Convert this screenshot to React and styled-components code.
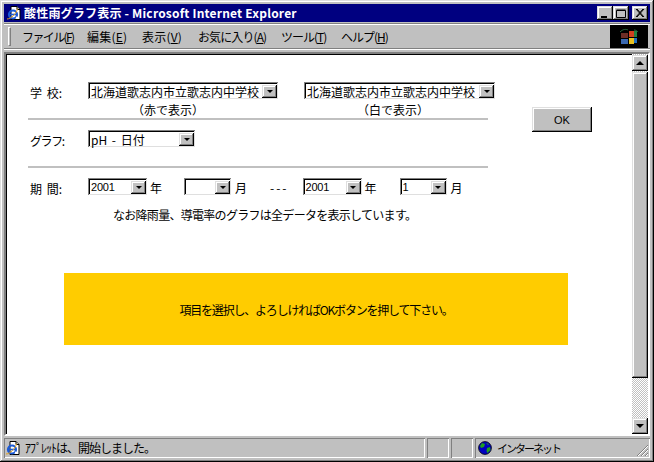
import React from "react";
import styled, { createGlobalStyle } from "styled-components";

const FONT = `"Noto Sans CJK JP", "Liberation Sans", sans-serif`;

const Global = createGlobalStyle`
  html, body { margin: 0; padding: 0; background: #c0c0c0; }
  body { font-family: ${FONT}; font-size: 12px; color: #000; }
  * { box-sizing: border-box; }
`;

const raised = `box-shadow: inset -1px -1px 0 #000, inset 1px 1px 0 #dfdfdf, inset -2px -2px 0 #808080, inset 2px 2px 0 #fff;`;

const Window = styled.div`
  width: 654px; height: 462px; background: #c0c0c0; padding: 4px;
  display: flex; flex-direction: column;
  box-shadow: inset -1px -1px 0 #000, inset 1px 1px 0 #dfdfdf, inset -2px -2px 0 #808080, inset 2px 2px 0 #fff;
  overflow: hidden;
`;
const TitleBar = styled.div`
  height: 18px; background: #000080; color: #fff; flex: none;
  display: flex; align-items: center; padding: 0 2px 0 2px;
`;
const TitleText = styled.span`
  font: bold 12px/16px ${FONT}; margin-left: 2px; white-space: pre; letter-spacing: 0.2px; flex: 1;
`;
const CtlButton = styled.button`
  width: 16px; height: 14px; padding: 0; border: 0; background: #c0c0c0; ${raised}
  margin-left: ${p => p.$gap || 0}px; display: flex; align-items: center; justify-content: center;
`;
const MenuBar = styled.div`
  height: 25px; margin-top: 2px; flex: none; display: flex; align-items: stretch;
  border-top: 1px solid #fff; border-bottom: 1px solid #808080; box-shadow: 0 -1px 0 #808080, 0 1px 0 #fff;
`;
const Grip = styled.div`
  width: 3px; height: 19px; margin: 2px 0 0 4px; flex: none;
  border: 1px solid; border-color: #fff #808080 #808080 #fff;
`;
const MenuItems = styled.div`
  flex: 1; display: flex; align-items: center; height: 100%;
`;
const MenuItem = styled.span`
  font: 12px/16px ${FONT}; white-space: nowrap; width: ${p => p.$w}px; flex: none;
  margin-left: ${p => p.$ml || 0}px; letter-spacing: ${p => p.$ls ?? -0.3}px;
`;
const LogoBox = styled.div`
  width: 38px; height: 23px; background: #000; flex: none; display: flex;
  align-items: center; justify-content: center; margin-right: 2px;
`;
const Viewport = styled.div`
  flex: 1; min-height: 0; margin-top: 3px; display: flex; background: #fff; border: 2px solid;
  border-color: #808080 #fff #fff #808080; box-shadow: inset 1px 1px 0 #000;
`;
const Page = styled.div`
  flex: 1; padding: 28px 0 0 22px; min-width: 0;
`;
const FormArea = styled.div`
  display: flex; align-items: flex-start;
`;
const FormColumn = styled.div`
  width: 460px; flex: none;
`;
const Row = styled.div`
  display: flex; align-items: center; height: 17px; margin-top: ${p => p.$mt || 0}px;
`;
const FieldLabel = styled.span`
  width: 60px; flex: none; padding-left: 2px; font: 12px/16px ${FONT}; white-space: pre; position: relative; top: 2px;
  word-spacing: 2px; letter-spacing: ${p => p.$ls || 0}px;
`;
const Select = styled.div`
  width: ${p => p.$w}px; height: 17px; flex: none; background: #fff; display: flex; align-items: center;
  margin-left: ${p => p.$ml || 0}px; padding: 2px 1px 1px 3px;
  box-shadow: inset 1px 1px 0 #808080, inset -1px -1px 0 #dfdfdf, inset 2px 2px 0 #000;
`;
const SelectText = styled.span`
  flex: 1; font: ${p => p.$small ? 11 : 12}px/13px ${p => p.$small ? `"Liberation Sans", sans-serif` : FONT}; white-space: nowrap;
  letter-spacing: ${p => p.$small ? "-0.2px" : "0"}; word-spacing: ${p => p.$small ? 0 : 2}px; min-width: 0;
`;
const SelectArrow = styled.span`
  width: 15px; height: 13px; flex: none; background: #c0c0c0; ${raised}
  display: flex; align-items: center; justify-content: center;
  &::after { content: ""; border: 3px solid transparent; border-top: 3px solid #000; border-bottom: 0; }
`;
const CaptionRow = styled.div`
  display: flex; height: 19px; padding-top: 3px;
`;
const Caption = styled.span`
  font: 12px/16px ${FONT}; flex: none; margin-left: ${p => p.$ml}px; white-space: nowrap;
`;
const Rule = styled.div`
  height: 2px; background: #c0c0c0; margin-top: ${p => p.$mt || 0}px;
`;
const Unit = styled.span`
  font: 12px/16px ${FONT}; flex: none; margin-left: ${p => p.$ml || 3}px; position: relative; top: 1px;
`;
const Dashes = styled(Unit)`
  letter-spacing: 2px;
`;
const Note = styled.p`
  margin: 12px 0 0 85px; font: 12px/16px ${FONT}; white-space: nowrap; letter-spacing: -0.71px;
`;
const OkButton = styled.button`
  width: 60px; height: 25px; margin: 25px 0 0 44px; border: 0; padding: 0; background: #c0c0c0; flex: none;
  font: 11px/16px "Liberation Sans", sans-serif; color: #000; ${raised}
`;
const Banner = styled.div`
  width: 504px; height: 72px; margin: 50px 0 0 36px; background: #ffcc00; display: flex;
  align-items: center; justify-content: center; font: 12px/16px ${FONT}; letter-spacing: -1.2px; white-space: nowrap;
  padding-top: 1px;
`;
const Scrollbar = styled.div`
  width: 16px; flex: none; display: flex; flex-direction: column; padding-top: 1px;
  background: repeating-conic-gradient(#c0c0c0 0 25%, #fff 0 50%) 0 0 / 2px 2px;
`;
const ScrollBtn = styled.div`
  height: 16px; background: #c0c0c0; flex: none; ${raised} display: flex; align-items: center; justify-content: center;
  &::after { content: ""; border: 4px solid transparent;
    ${p => p.$up ? "border-bottom: 4px solid #000; border-top: 0;" : "border-top: 4px solid #000; border-bottom: 0;"} }
`;
const ScrollThumb = styled.div`
  height: 306px; margin-top: 1px; background: #c0c0c0; flex: none; ${raised}
`;
const ScrollRest = styled.div`flex: 1;`;
const StatusBar = styled.div`
  height: 20px; margin-top: 2px; flex: none; display: flex; gap: 2px; position: relative;
`;
const StatusCell = styled.div`
  width: ${p => p.$w ? p.$w + "px" : "auto"}; flex: ${p => p.$w ? "none" : 1}; display: flex; align-items: center;
  gap: ${p => p.$gap || 4}px; padding-left: ${p => p.$pl || 1}px; white-space: nowrap;
  box-shadow: inset 1px 1px 0 #808080, inset -1px -1px 0 #fff;
`;
const StatusText = styled.span`
  font: ${p => p.$size || 12}px/16px ${FONT}; letter-spacing: ${p => p.$ls}px;
`;
const ResizeGrip = styled.svg`
  position: absolute; right: 1px; bottom: 1px;
`;

const PageIcon = () => (
  <svg width="16" height="16" viewBox="0 0 16 16">
    <path d="M5 1.5h6l3 3v10H5z" fill="#fff" stroke="#000" />
    <path d="M11 1.5v3h3" fill="#c0c0c0" stroke="#000" />
    <circle cx="7" cy="9.5" r="4" fill="none" stroke="#1a5ad8" strokeWidth="2.2" />
    <path d="M3 9.5h8" stroke="#1a5ad8" strokeWidth="1.6" />
    <path d="M10 12.5l2 .5" stroke="#fff" strokeWidth="2" />
    <path d="M1 14C5 14 11 8 11.5 3.5" fill="none" stroke="#e0a020" strokeWidth="1" />
  </svg>
);
const MinIcon = () => <svg width="10" height="9" viewBox="0 0 10 9"><path d="M1 7h6v2H1z" fill="#000" /></svg>;
const MaxIcon = () => <svg width="10" height="9" viewBox="0 0 10 9"><path d="M.5 1.5h9v7h-9z M.5 1h9" fill="none" stroke="#000" /></svg>;
const CloseIcon = () => <svg width="10" height="9" viewBox="0 0 10 9"><path d="M1 0l7 8M8 0L1 8M2 0l7 8M9 0L2 8" stroke="#000" strokeWidth="1" /></svg>;
const WinLogo = () => (
  <svg width="20" height="20" viewBox="0 0 20 20">
    <path d="M2 6h7v5H2z" fill="#8a3a30" opacity=".8" />
    <path d="M2 12h7v5H2z" fill="#3a68b0" />
    <path d="M10 4h5v6h-5z" fill="#d04020" />
    <path d="M10 11h5v6h-5z" fill="#e8c020" />
    <path d="M15 4h3v6h-3z" fill="#208040" />
    <path d="M15 11h3v5h-3z" fill="#2070c0" />
    <path d="M1 5c3-3 6-3 8-2M15 3c2 0 3 1 4 2" stroke="#2a6a40" fill="none" />
  </svg>
);
const Globe = () => (
  <svg width="14" height="14" viewBox="0 0 14 14">
    <circle cx="7" cy="7" r="6.4" fill="#0000c0" stroke="#000" strokeWidth=".8" />
    <path d="M4 2l3 1-1 3-3 1-1-2zM9 7l3-1 .5 3-3 3-1-2zM8 2l3 1-1 1z" fill="#20a020" />
  </svg>
);

const Field = ({ w, ml, text, small }) => (
  <Select $w={w} $ml={ml}>
    <SelectText $small={small}>{text}</SelectText>
    <SelectArrow />
  </Select>
);

const SCHOOL = "北海道歌志内市立歌志内中学校";

export default function App() {
  return (
    <Window>
      <Global />
      <TitleBar>
        <PageIcon />
        <TitleText>酸性雨グラフ表示 - Microsoft Internet Explorer</TitleText>
        <CtlButton><MinIcon /></CtlButton>
        <CtlButton><MaxIcon /></CtlButton>
        <CtlButton $gap={3}><CloseIcon /></CtlButton>
      </TitleBar>
      <MenuBar>
        <Grip />
        <MenuItems>
          <MenuItem $ml={11} $w={65} $ls={-1.6}>ファイル(<u>F</u>)</MenuItem>
          <MenuItem $w={55} $ls={0.2}>編集(<u>E</u>)</MenuItem>
          <MenuItem $w={56} $ls={0.2}>表示(<u>V</u>)</MenuItem>
          <MenuItem $w={83} $ls={-0.9}>お気に入り(<u>A</u>)</MenuItem>
          <MenuItem $w={60} $ls={-1}>ツール(<u>T</u>)</MenuItem>
          <MenuItem $w={60} $ls={-1}>ヘルプ(<u>H</u>)</MenuItem>
        </MenuItems>
        <LogoBox><WinLogo /></LogoBox>
      </MenuBar>
      <Viewport>
        <Page>
          <FormArea>
            <FormColumn>
              <Row>
                <FieldLabel>学 校:</FieldLabel>
                <Field w={190} text={SCHOOL} />
                <Field w={191} ml={26} text={SCHOOL} />
              </Row>
              <CaptionRow>
                <Caption $ml={104}>（赤で表示）</Caption>
                <Caption $ml={153}>（白で表示）</Caption>
              </CaptionRow>
              <Rule />
              <Row $mt={10}>
                <FieldLabel $ls={-1.4}>グラフ:</FieldLabel>
                <Field w={107} text="pH - 日付" />
              </Row>
              <Rule $mt={19} />
              <Row $mt={10}>
                <FieldLabel>期 間:</FieldLabel>
                <Field w={59} text="2001" small />
                <Unit>年</Unit>
                <Field w={47} ml={22} text="" small />
                <Unit $ml={4}>月</Unit>
                <Dashes $ml={23}>---</Dashes>
                <Field w={59} ml={14} text="2001" small />
                <Unit>年</Unit>
                <Field w={47} ml={23} text="1" small />
                <Unit $ml={4}>月</Unit>
              </Row>
            </FormColumn>
            <OkButton>OK</OkButton>
          </FormArea>
          <Note>なお降雨量、導電率のグラフは全データを表示しています。</Note>
          <Banner>項目を選択し、よろしければOKボタンを押して下さい。</Banner>
        </Page>
        <Scrollbar>
          <ScrollBtn $up />
          <ScrollThumb />
          <ScrollRest />
          <ScrollBtn />
        </Scrollbar>
      </Viewport>
      <StatusBar>
        <StatusCell>
          <PageIcon />
          <StatusText $ls={-1}>ｱﾌﾟﾚｯﾄは、開始しました。</StatusText>
        </StatusCell>
        <StatusCell $w={22} />
        <StatusCell $w={22} />
        <StatusCell $w={175} $pl={3} $gap={5}>
          <Globe />
          <StatusText $size={11} $ls={-2}>インターネット</StatusText>
        </StatusCell>
        <ResizeGrip width="14" height="14" viewBox="0 0 14 14">
          <path d="M13 2L2 13M13 6L6 13M13 10l-3 3" stroke="#808080" fill="none" />
          <path d="M13 3L3 13M13 7l-6 6M13 11l-2 2" stroke="#fff" fill="none" />
        </ResizeGrip>
      </StatusBar>
    </Window>
  );
}
